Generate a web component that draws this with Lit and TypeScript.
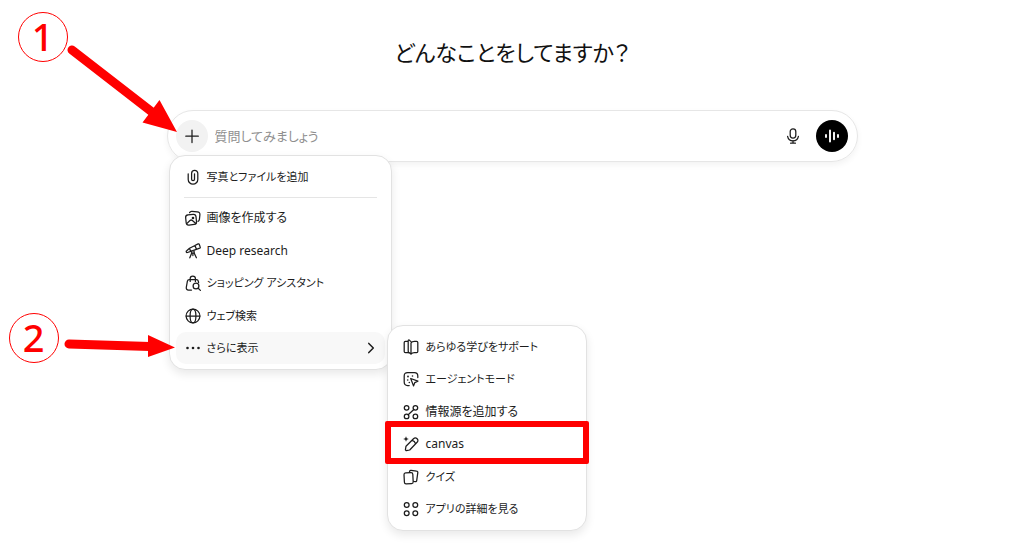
import { LitElement, html, css, svg } from "lit";
import { customElement } from "lit/decorators.js";

const icons: Record<string, unknown> = {
  clip: svg`<path d="M3.2 4.8v5.6a4.8 4.8 0 0 0 9.6 0V4.4a3.1 3.1 0 0 0-6.2 0v5.8a1.45 1.45 0 0 0 2.9 0V4.8"/>`,
  image: svg`<rect x="0.9" y="4.6" width="10.4" height="10.2" rx="2.6" transform="rotate(-6 6 9.8)"/><path d="M4.6 2.6c.5-1 1.3-1.4 2.4-1.3l5.3.5c1.8.2 2.8 1.2 2.6 3l-.5 4.6c-.1 1-.6 1.700-1.400 2M2 13.400l3-2.900c.8-.7 1.600-.7 2.400 0l3.400 3"/><circle cx="8" cy="8" r=".7"/>`,
  telescope: svg`<path d="M10 2.500l3-1.600c.5-.3 1-.1 1.200.4l1 2.700c.2.500 0 1-.5 1.200l-3.300 1.100zM10 2.500l1.400 3.800-5.700 2.100-1.200-3.100zM4.500 5.300l1.200 3.100-3.200 1.100c-.6.200-1 0-1.200-.5s0-1 .4-1.300zM7.200 8.800L4.800 14.800M8.600 8.800l2.800 6M7.900 9v3.600"/><circle cx="7.900" cy="8.900" r="1.300" fill="#fff"/>`,
  bag: svg`<path d="M5.200 6.400V3.600a2.600 2.600 0 0 1 5.200 0v2.800M13.600 7.600l-.3-1.400c-.2-1-.8-1.600-1.900-1.600H4.300c-1.100 0-1.700.6-1.900 1.600l-1.100 6.100c-.3 1.600.6 2.700 2.200 2.700h3"/><circle cx="11" cy="11" r="2.900"/><path d="M13.200 13.200l2.200 2.200"/>`,
  globe: svg`<circle cx="8" cy="8" r="6.900"/><ellipse cx="8" cy="8" rx="2.900" ry="6.900"/><path d="M1.100 8h13.800"/>`,
  more: svg`<g fill="currentColor" stroke="none"><circle cx="2.500" cy="8" r="1.300"/><circle cx="8" cy="8" r="1.300"/><circle cx="13.500" cy="8" r="1.300"/></g>`,
  chevron: svg`<path d="M5.800 3.400L10.300 8l-4.500 4.600" stroke-width="1.500"/>`,
  book: svg`<path d="M5.200 2.300H2.400c-.7 0-1.200.5-1.200 1.200v8.900c0 .7.500 1.200 1.200 1.200h2.200c1.400 0 2.500.4 3.400 1.600.9-1.200 2-1.600 3.400-1.600h2.200c.7 0 1.200-.5 1.200-1.200V3.500c0-.7-.5-1.200-1.200-1.200h-2.200c-1.500 0-2.700.5-3.400 1.700v11M8 15l-2.300-1.800c-.3-.3-.5-.6-.5-1V1.700c0-.7.600-1 1.100-.6L8 2.600"/>`,
  agent: svg`<path d="M6.200 14.500H4.600c-2.200 0-3.400-1.200-3.400-3.400V4.900c0-2.200 1.200-3.400 3.400-3.400h6.800c2.200 0 3.400 1.200 3.400 3.400v1.600"/><path d="M7.700 7.500l7.200 2.700-3.100 1.400-1.300 3.300z"/><g fill="currentColor" stroke="none"><circle cx="5" cy="5.500" r=".9"/><circle cx="9.500" cy="5" r=".8"/><circle cx="4.700" cy="9" r=".8"/><circle cx="6.300" cy="11.500" r=".8"/></g>`,
  sources: svg`<circle cx="3.600" cy="3.800" r="2.300"/><circle cx="12.400" cy="3.800" r="2.300"/><circle cx="3.600" cy="12.400" r="2.300"/><circle cx="12.400" cy="12.400" r="2.300"/><path d="M10.800 5.500L5.200 10.800"/>`,
  pencil: svg`<path d="M3.300 14.700l-.9-.9.600-3.600 7.500-7.500c1.100-1.100 2.500-1.100 3.600 0s1.100 2.500 0 3.600L6.700 14zM9.100 4.300c1.800.4 3 1.700 3.400 3.300"/><path d="M3 .2l.8 2 2 .8-2 .8-.8 2-.8-2-2-.8 2-.8z" fill="currentColor" stroke="none"/>`,
  cards: svg`<rect x="1.200" y="3.800" width="8.800" height="11" rx="1.700" transform="rotate(-3 5.600 9.300)"/><path d="M6.400 3.300l.2-1c.2-.8.700-1.100 1.500-1l5.500.8c.9.100 1.300.7 1.200 1.500l-1.100 8c-.1.900-.7 1.200-1.500 1.100l-1.500-.2"/>`,
  apps: svg`<circle cx="3.700" cy="3.900" r="2.400"/><circle cx="12.300" cy="3.900" r="2.400"/><circle cx="3.700" cy="12.300" r="2.400"/><circle cx="12.300" cy="12.300" r="2.400"/>`,
  plus: svg`<path d="M8 2v12.500M1.800 8.200h12.500"/>`,
  mic: svg`<rect x="5.200" y=".8" width="5.600" height="9.200" rx="2.800"/><path d="M2.600 8.300a5.500 5.500 0 0 0 10.800 0M8 12.600v2.500M5.600 15.200h4.800"/>`,
  wave: svg`<path d="M2 7v2M6 2.500v11M10 4.700v6.600M14 7v2" stroke-width="1.900"/>`,
};

const icon = (name: string) => html`<svg class="icon" viewBox="0 0 16 16" aria-hidden="true">${icons[name]}</svg>`;

interface Tool {
  icon: string;
  label: string;
  compact?: boolean;
  open?: boolean;
  marked?: boolean;
}

const attach: Tool = { icon: "clip", label: "写真とファイルを追加", compact: true };

const tools: Tool[] = [
  { icon: "image", label: "画像を作成する" },
  { icon: "telescope", label: "Deep research" },
  { icon: "bag", label: "ショッピング アシスタント", compact: true },
  { icon: "globe", label: "ウェブ検索", compact: true },
  { icon: "more", label: "さらに表示", compact: true, open: true },
];

const moreTools: Tool[] = [
  { icon: "book", label: "あらゆる学びをサポート", compact: true },
  { icon: "agent", label: "エージェントモード", compact: true },
  { icon: "sources", label: "情報源を追加する" },
  { icon: "pencil", label: "canvas", marked: true },
  { icon: "cards", label: "クイズ", compact: true },
  { icon: "apps", label: "アプリの詳細を見る", compact: true },
];

@customElement("app-root")
export class AppRoot extends LitElement {
  static styles = css`
    :host {
      display: block;
      min-height: 100vh;
      overflow: hidden;
      background: #fff;
      color: #1c1c1c;
      font-family: "Noto Sans", "Noto Sans CJK JP", sans-serif;
      font-feature-settings: "palt";
    }
    * { box-sizing: border-box; }
    button, input { font: inherit; font-feature-settings: inherit; color: inherit; border: 0; background: none; padding: 0; margin: 0; }
    button { cursor: pointer; }
    .page {
      display: flex;
      flex-direction: column;
      align-items: center;
      gap: 40px;
      padding: 34px 16px 0;
    }
    h1 { margin: 0; font-size: 22px; line-height: 36px; font-weight: 400; color: #111; }
    .area { position: relative; width: 100%; max-width: 691px; }
    .icon {
      display: block;
      flex: none;
      width: 16px;
      height: 16px;
      fill: none;
      stroke: currentColor;
      stroke-width: 1.25;
      stroke-linecap: round;
      stroke-linejoin: round;
      overflow: visible;
    }
    .composer {
      display: flex;
      align-items: center;
      gap: 7px;
      padding: 9px 9px 9px 8px;
      border: 1px solid #e6e6e6;
      border-radius: 26px;
      box-shadow: 0 3px 6px rgba(0, 0, 0, 0.05);
    }
    .round { display: grid; place-items: center; width: 32px; height: 32px; border-radius: 50%; }
    .add { background: #f2f2f2; }
    .voice { background: #000; color: #fff; }
    .composer input { flex: 1; min-width: 0; height: 22px; font-size: 13px; outline: none; }
    .composer input::placeholder { color: #8f8f8f; opacity: 1; }
    .menu {
      position: absolute;
      background: #fff;
      border: 1px solid #e2e2e2;
      border-radius: 16px;
      box-shadow: 0 4px 10px rgba(0, 0, 0, 0.09);
      font-size: 12px;
    }
    .tools { top: 45px; left: 2px; width: 223px; padding: 5px 6px; }
    .more { top: 215px; left: 220px; width: 200px; padding: 5px 6px; }
    ul { display: grid; align-content: space-between; margin: 0; padding: 0; list-style: none; }
    .tools ul { min-height: 162px; }
    .more ul { min-height: 194px; }
    .item {
      display: flex;
      align-items: center;
      gap: 6px;
      width: 100%;
      height: 32px;
      padding: 0 6px 0 9px;
      border-radius: 10px;
      text-align: left;
      white-space: nowrap;
    }
    .more .item { gap: 7px; }
    .item.open { background: #f8f8f8; }
    .label { flex: 1; line-height: 18px; }
    .label.compact { font-size: 11px; }
    hr { margin: 4px 8px; border: 0; border-top: 1px solid #e5e5e5; }
    li { position: relative; }
    .mark { position: absolute; inset: -7px -9px -4px; border: 6px solid #f00; border-radius: 2px; pointer-events: none; }
    .step {
      position: absolute;
      display: grid;
      place-items: center;
      width: 50px;
      height: 50px;
      border: 1px solid #f00;
      border-radius: 50%;
      color: #f00;
      font: 500 38px/46px "Noto Sans", sans-serif;
      padding-bottom: 2px;
    }
    .step.one { top: -98px; left: -149px; }
    .step.two { top: 203px; left: -158px; }
    .arrows { position: absolute; top: -110px; left: -167px; width: 200px; height: 380px; fill: #f00; pointer-events: none; }
    .shaft { stroke: #f00; stroke-width: 9; stroke-linecap: round; }
  `;

  private button(t: Tool) {
    return html`<button class="item ${t.open ? "open" : ""}" role="menuitem">
      ${icon(t.icon)}<span class="label ${t.compact ? "compact" : ""}">${t.label}</span>${t.open ? icon("chevron") : ""}
    </button>`;
  }

  private item(t: Tool) {
    return html`<li>${this.button(t)}${t.marked ? html`<span class="mark"></span>` : ""}</li>`;
  }

  render() {
    return html`
      <main class="page">
        <h1>どんなことをしてますか？</h1>
        <div class="area">
          <form class="composer">
            <button class="round add" type="button" aria-label="追加">${icon("plus")}</button>
            <input type="text" aria-label="質問" placeholder="質問してみましょう" />
            <button class="round" type="button" aria-label="音声入力">${icon("mic")}</button>
            <button class="round voice" type="button" aria-label="音声モード">${icon("wave")}</button>
          </form>
          <div class="menu tools" role="menu">
            ${this.button(attach)}
            <hr />
            <ul>${tools.map((t) => this.item(t))}</ul>
          </div>
          <div class="menu more" role="menu">
            <ul>${moreTools.map((t) => this.item(t))}</ul>
          </div>
          <span class="step one">1</span>
          <span class="step two">2</span>
          <svg class="arrows" viewBox="0 0 200 380" aria-hidden="true">
            <path class="shaft" d="M72 50L152 112M69 344L150 346.500" />
            <path d="M177 132L159.500 100L142.500 122.500zM175 347.500L148 335v22z" />
          </svg>
        </div>
      </main>
    `;
  }
}
